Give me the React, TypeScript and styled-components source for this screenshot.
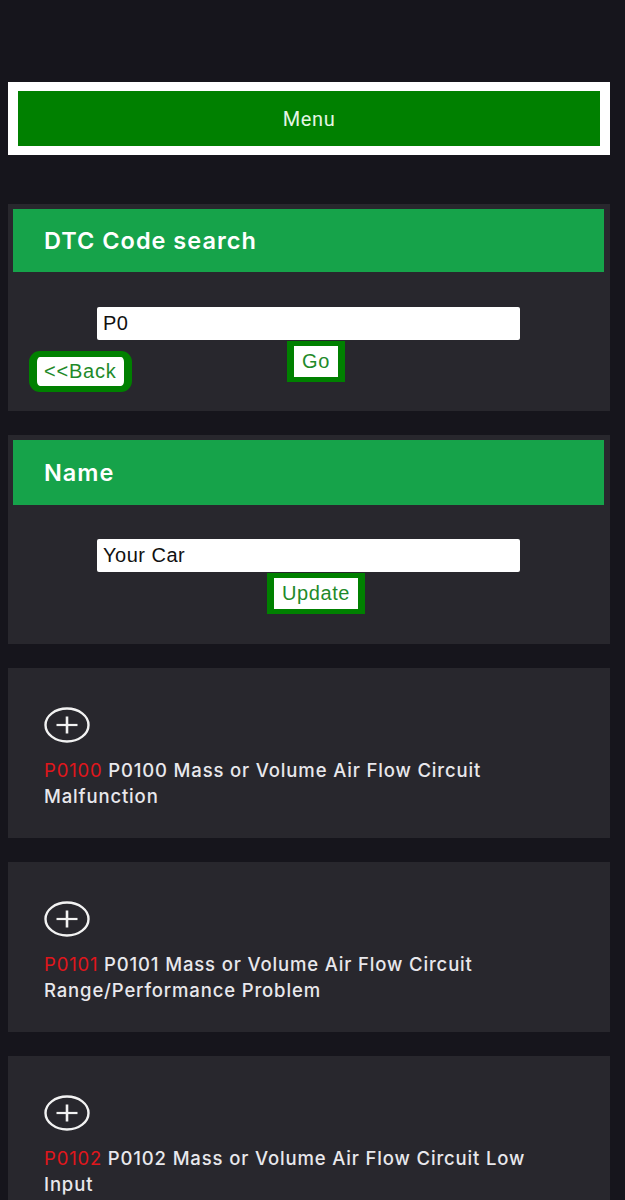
import { useState } from "react";
import styled, { createGlobalStyle } from "styled-components";

const GlobalStyle = createGlobalStyle`
  html, body {
    margin: 0;
    padding: 0;
    background-color: #16151c;
  }
  body {
    font-family: Inter, "Noto Sans", sans-serif;
    color: #e6e6e6;
  }
`;

const codes = [
  { code: "P0100", text: "P0100 Mass or Volume Air Flow Circuit Malfunction" },
  { code: "P0101", text: "P0101 Mass or Volume Air Flow Circuit Range/Performance Problem" },
  { code: "P0102", text: "P0102 Mass or Volume Air Flow Circuit Low Input" },
];

const PlusIcon = () => (
  <svg width="46" height="36" viewBox="0 0 46 36" preserveAspectRatio="none">
    <ellipse cx="23" cy="18" rx="21.5" ry="16.5" fill="none" stroke="#f2f2f2" strokeWidth="2.4" />
    <line x1="12.5" y1="18" x2="33.5" y2="18" stroke="#f2f2f2" strokeWidth="2.2" />
    <line x1="23" y1="9.5" x2="23" y2="26.5" stroke="#f2f2f2" strokeWidth="2.6" />
  </svg>
);

const App = () => {
  const [search, setSearch] = useState("P0");
  const [name, setName] = useState("Your Car");

  return (
    <>
      <GlobalStyle />
      <Page>
        <MenuFrame>
          <MenuButton>Menu</MenuButton>
        </MenuFrame>

        <Card $gap={49}>
          <CardHeader>DTC Code search</CardHeader>
          <CardBody $top={35} $bottom={19}>
            <TextInput value={search} onChange={(e) => setSearch(e.target.value)} />
            <ButtonRow>
              <BackButton>&lt;&lt;Back</BackButton>
              <SquareButton>Go</SquareButton>
            </ButtonRow>
          </CardBody>
        </Card>

        <Card $gap={24}>
          <CardHeader $tall>Name</CardHeader>
          <CardBody $top={34} $bottom={30}>
            <TextInput value={name} onChange={(e) => setName(e.target.value)} />
            <ButtonRow>
              <span />
              <SquareButton>Update</SquareButton>
            </ButtonRow>
          </CardBody>
        </Card>

        {codes.map((item) => (
          <CodeCard key={item.code}>
            <ExpandButton aria-label="expand">
              <PlusIcon />
            </ExpandButton>
            <CodeText>
              <CodeTag>{item.code}</CodeTag>
              {item.text}
            </CodeText>
          </CodeCard>
        ))}
      </Page>
    </>
  );
};

export default App;

const Page = styled.div`
  padding: 82px 15px 40px 8px;
  display: flex;
  flex-direction: column;
`;

const MenuFrame = styled.div`
  background-color: #ffffff;
  padding: 9px 10px 9px;
`;

const MenuButton = styled.button`
  width: 100%;
  height: 55px;
  border: none;
  background-color: #008000;
  color: #e4f5e4;
  font-family: Roboto, sans-serif;
  font-size: 20px;
  letter-spacing: 0.6px;
`;

const Card = styled.section<{ $gap: number }>`
  margin-top: ${(p) => p.$gap}px;
  background-color: #28272d;
  padding: 5px 6px 0 5px;
`;

const CardHeader = styled.h2<{ $tall?: boolean }>`
  margin: 0;
  height: ${(p) => (p.$tall ? 65 : 63)}px;
  display: flex;
  align-items: center;
  padding-left: 31px;
  background-color: #16a34a;
  color: #ffffff;
  font-size: 23.5px;
  font-weight: 600;
  letter-spacing: 1px;
`;

const CardBody = styled.div<{ $top: number; $bottom: number }>`
  padding: ${(p) => p.$top}px 0 ${(p) => p.$bottom}px;
  display: flex;
  flex-direction: column;
  align-items: center;
`;

const TextInput = styled.input`
  box-sizing: border-box;
  width: 423px;
  height: 33px;
  border: none;
  border-radius: 2px;
  padding: 0 6px;
  background-color: #ffffff;
  color: #111;
  font-family: "Liberation Sans", Arial, sans-serif;
  font-size: 20px;
  letter-spacing: 0.5px;
  outline: none;
`;

const ButtonRow = styled.div`
  width: 100%;
  display: grid;
  grid-template-columns: 1fr auto 1fr;
  align-items: start;
  margin-top: 1px;

  & > :first-child {
    justify-self: start;
  }
`;

const BackButton = styled.button`
  margin: 10px 0 0 16px;
  height: 41px;
  padding: 0 7px;
  border: solid #008000;
  border-width: 6px 8px;
  border-radius: 11px;
  background-color: #ffffff;
  color: #1f8a2a;
  font-family: "Liberation Sans", Arial, sans-serif;
  font-size: 20px;
  letter-spacing: 0.8px;
`;

const SquareButton = styled.button`
  height: 41px;
  margin-left: 15px;
  padding: 0 8px;
  border: solid #008000;
  border-width: 5px 7px;
  border-radius: 0;
  background-color: #ffffff;
  color: #1f8a2a;
  font-family: "Liberation Sans", Arial, sans-serif;
  font-size: 20px;
  letter-spacing: 0.6px;
`;

const CodeCard = styled.article`
  margin-top: 24px;
  height: 170px;
  box-sizing: border-box;
  background-color: #28272d;
  padding: 39px 36px 0;
  display: flex;
  flex-direction: column;
  align-items: flex-start;
`;

const ExpandButton = styled.button`
  padding: 0;
  border: none;
  background: none;
  display: flex;
  height: 36px;
`;

const CodeText = styled.p`
  margin: 14px 0 0;
  font-size: 18.5px;
  line-height: 26px;
  font-weight: 500;
  color: #e8e8ec;
  letter-spacing: 0.85px;
  max-width: 500px;
`;

const CodeTag = styled.span`
  color: #e0161c;
  font-weight: 400;
  margin-right: 0.3em;
`;
